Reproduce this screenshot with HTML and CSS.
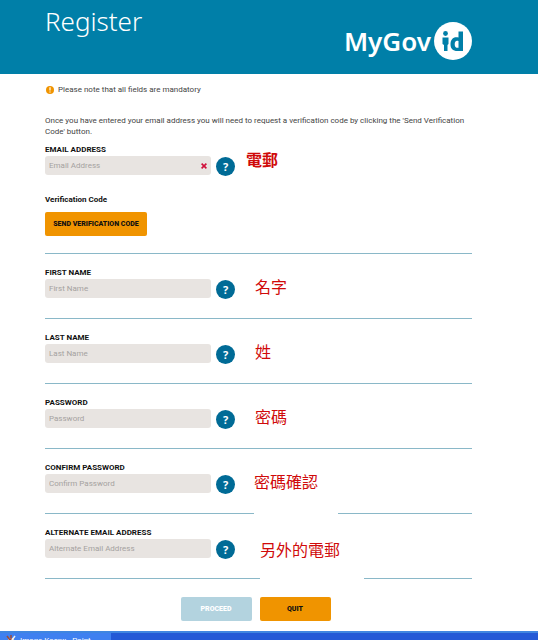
FILE: index.html
```html
<!DOCTYPE html>
<html lang="en">
<head>
  <meta charset="UTF-8" />
  <meta name="viewport" content="width=device-width, initial-scale=1.0" />
  <title>Register - MyGovID</title>
  <link rel="stylesheet" href="styles.css">
</head>
<body>
  <header class="header">
    <h1>Register</h1>
    <div class="logo">
      <span class="logo-text">MyGov</span>
      <svg class="logo-mark" viewBox="0 0 38 38" role="img" aria-label="id">
        <circle cx="19" cy="19" r="19" fill="#fff"/>
        <circle cx="11.500" cy="11.500" r="2.400" fill="#007fa8"/>
        <path d="M8.500 15.500h6v6.500l-1 1v6h-3.500v-6l-1.500-1z" fill="#007fa8"/>
        <path fill-rule="evenodd" d="M24.500 9.500H29V29h-5.500c-4.700 0-7-2.400-7-6.800 0-4.300 2.300-7 5.800-7 .8 0 1.600.1 2.200.4zM24.500 19c-2.300-.9-3.800.2-3.800 3.200 0 2.700 1.100 3.800 3.800 3.600z" fill="#007fa8"/>
      </svg>
    </div>
  </header>

  <main class="content">
    <p class="notice">
      <svg class="notice-icon" viewBox="0 0 8 8" aria-hidden="true">
        <circle cx="4" cy="4" r="4" fill="#f09400"/>
        <path d="M3.400 1.300h1.200v3.200H3.400zM3.400 5.400h1.200v1.200H3.400z" fill="#fff"/>
      </svg>
      Please note that all fields are mandatory
    </p>

    <form>
      <p class="intro">Once you have entered your email address you will need to request a verification code by clicking the 'Send Verification Code' button.</p>

      <section class="field email">
        <label for="email">EMAIL ADDRESS</label>
        <div class="row">
          <div class="box">
            <input type="text" id="email" placeholder="Email Address" />
            <svg class="error" viewBox="0 0 6 6" aria-hidden="true"><path d="M.6.600l4.800 4.800M5.400.600L.6 5.400" stroke="#d0103a" stroke-width="1.600"/></svg>
          </div>
          <button type="button" class="help">?</button>
          <span class="note note-email" lang="zh-Hant">電郵</span>
        </div>
        <h2>Verification Code</h2>
        <button type="button" class="btn btn-send">SEND VERIFICATION CODE</button>
      </section>

      <section class="field">
        <label for="first">FIRST NAME</label>
        <div class="row">
          <div class="box"><input type="text" id="first" placeholder="First Name" /></div>
          <button type="button" class="help">?</button>
          <span class="note" lang="zh-Hant">名字</span>
        </div>
      </section>

      <section class="field">
        <label for="last">LAST NAME</label>
        <div class="row">
          <div class="box"><input type="text" id="last" placeholder="Last Name" /></div>
          <button type="button" class="help">?</button>
          <span class="note" lang="zh-Hant">姓</span>
        </div>
      </section>

      <section class="field">
        <label for="password">PASSWORD</label>
        <div class="row">
          <div class="box"><input type="password" id="password" placeholder="Password" /></div>
          <button type="button" class="help">?</button>
          <span class="note" lang="zh-Hant">密碼</span>
        </div>
      </section>

      <section class="field">
        <label for="confirm">CONFIRM PASSWORD</label>
        <div class="row">
          <div class="box"><input type="password" id="confirm" placeholder="Confirm Password" /></div>
          <button type="button" class="help">?</button>
          <span class="note note-confirm" lang="zh-Hant">密碼確認</span>
        </div>
      </section>

      <section class="field">
        <label for="alternate">ALTERNATE EMAIL ADDRESS</label>
        <div class="row">
          <div class="box"><input type="text" id="alternate" placeholder="Alternate Email Address" /></div>
          <button type="button" class="help">?</button>
          <span class="note note-alternate" lang="zh-Hant">另外的電郵</span>
        </div>
      </section>

      <div class="actions">
        <button type="submit" class="btn btn-proceed" disabled>PROCEED</button>
        <button type="button" class="btn">QUIT</button>
      </div>
    </form>
  </main>

  <footer class="taskbar">
    <div class="task">
      <svg class="task-icon" viewBox="0 0 10 10" aria-hidden="true">
        <path d="M2 3h6l-1 7H3z" fill="#d8d4cc"/>
        <path d="M1 1l3 4M5 0v5" stroke="#9c4a3c" stroke-width="1.500"/>
        <path d="M9 1L6 5" stroke="#f0f0f0" stroke-width="1.500"/>
      </svg>
      <span>Image Kaspx - Paint</span>
    </div>
  </footer>
</body>
</html>
```
FILE: styles.css
```css
* {
  box-sizing: border-box;
}

body {
  margin: 0;
  min-height: 100vh;
  display: flex;
  flex-direction: column;
  font-family: Roboto, 'Noto Sans CJK TC', sans-serif;
  font-size: 8px;
  color: #444;
  background: #fff;
}

h1, h2, p {
  margin: 0;
}

.header {
  height: 74px;
  padding: 4px 66px 0 45px;
  margin-right: 1px;
  display: flex;
  justify-content: space-between;
  align-items: flex-start;
  background: #007fa8;
  color: #fff;
  font-family: 'Noto Sans', sans-serif;
}

h1 {
  font-size: 26px;
  font-weight: 300;
  line-height: 34px;
}

.logo {
  display: flex;
  align-items: center;
  gap: 3px;
  margin-top: 18px;
}

.logo-text {
  font-size: 26px;
  font-weight: 600;
  line-height: 38px;
}

.logo-mark {
  width: 38px;
  height: 38px;
}

.content {
  flex: 1;
  padding: 10px 67px 10px 45px;
}

.notice {
  display: flex;
  align-items: center;
  gap: 4px;
  padding-left: 1px;
  line-height: 11px;
}

.notice-icon {
  width: 8px;
  height: 8px;
}

.intro {
  margin-top: 20px;
  line-height: 11px;
}

.field {
  height: 65px;
  padding-top: 13px;
  border-bottom: 1px solid #8ab8c8;
}

.field.email {
  height: 117px;
  padding-top: 7px;
}

label, h2 {
  display: block;
  font-size: 8px;
  font-weight: 700;
  line-height: 12px;
  color: #111;
}

.row {
  position: relative;
  display: flex;
  align-items: flex-start;
  gap: 5px;
}

.box {
  position: relative;
  width: 166px;
}

input {
  display: block;
  width: 100%;
  height: 19px;
  padding: 0 4px;
  border: none;
  border-radius: 3px;
  background: #e8e4e1;
  font: inherit;
  color: #444;
}

input::placeholder {
  color: #a5a2a0;
}

.error {
  position: absolute;
  top: 7px;
  right: 4px;
  width: 6px;
  height: 6px;
}

button {
  padding: 0;
  border: none;
  font: inherit;
  font-weight: 700;
  cursor: pointer;
}

.help {
  width: 19px;
  height: 19px;
  margin-top: 1px;
  border-radius: 50%;
  background: #006b96;
  color: #fff;
  font-family: 'Noto Sans', sans-serif;
  font-size: 11px;
}

.note {
  position: absolute;
  top: -3px;
  left: 210px;
  font-size: 16px;
  line-height: 24px;
  color: #d00a0a;
  background: #fff;
}

.note-email {
  top: -7px;
  left: 201px;
  font-weight: 700;
}

/* these two notes cover part of the rule below them */
.note-confirm {
  left: 209px;
  width: 84px;
  height: 44px;
}

.note-alternate {
  top: 0;
  left: 215px;
  width: 104px;
  height: 44px;
}

h2 {
  margin: 18px 0 6px;
}

.btn {
  width: 71px;
  height: 24px;
  border-radius: 2px;
  background: #f09400;
  color: #111;
  font-size: 7px;
  font-weight: 900;
}

.btn-send {
  width: 102px;
}

.btn-proceed {
  background: #b3d3df;
  color: #fff;
}

.actions {
  display: flex;
  justify-content: center;
  gap: 8px;
  margin-top: 18px;
  padding-right: 6px;
}

.taskbar {
  height: 9px;
  margin-right: 1px;
  overflow: hidden;
  border-top: 2px solid #3f86e0;
  background: #2359d6;
}

.task {
  display: flex;
  width: 111px;
  height: 16px;
  padding: 2px 6px;
  gap: 4px;
  background: #3f80f0;
  color: #fff;
  line-height: 12px;
}

.task-icon {
  width: 10px;
  height: 10px;
}
```
